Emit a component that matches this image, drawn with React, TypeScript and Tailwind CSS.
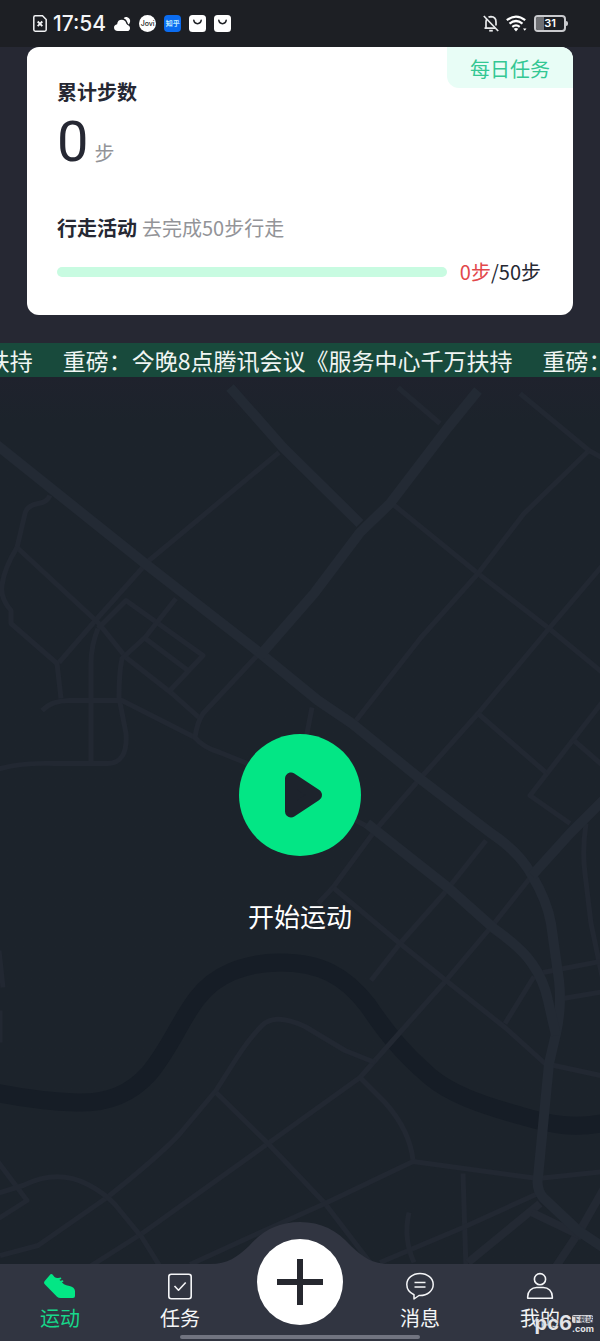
import React from 'react';
import clsx from 'clsx';

interface Tab {
  key: string;
  label: string;
  icon: React.ReactNode;
}

const NOTICE = '重磅：今晚8点腾讯会议《服务中心千万扶持';
const STEPS = 0;
const GOAL = 50;

const majorRoads = [
  'M-5 443 50 487 145 563 253 647 318 700 352 723 421 779 490 832Q520 852 532 875 547 900 551 923L559 980Q562 1006 556 1033L549 1063 538 1177Q536 1188 543 1197L578 1230 605 1248',
  'M230 387 283 447 360 523',
  'M478 390 448 427 390 503 360 532 314 593 260 655',
  'M367 823 448 887 494 928Q522 948 532 963 544 980 548 1000L556 1035',
  'M610 793 570 833 532 875',
];

const minorRoads = [
  'M279 452 149 560 98 617 59 662',
  'M50 495Q47 502 38 503 27 505 25 513L17 547 98 622 126 657 172 693 199 717',
  'M17 547Q4 568 2 585 0 597 11 610V623L57 663 61 698',
  'M98 628 126 600 203 655 170 690',
  'M176 598 145 637 122 658Q119 672 119 697L126 733Q128 763 107 763L54 763Q20 762-3 769',
  'M144 637 188 670',
  'M98 628Q91 645 91 663V762',
  'M42 710Q52 700 69 700H122L195 737',
  'M260 652 203 713Q197 722 195 737 203 747 220 752L245 762 375 830',
  'M312 707 306 738',
  'M392 503 478 573 549 628 605 674',
  'M520 393 589 450 524 513 478 573 421 637 356 720',
  'M589 450 605 459',
  'M398 387 440 423',
  'M605 562 549 628 478 713 421 777 375 830 333 887 318 903',
  'M478 713 547 773 530 795 570 823',
  'M605 698 547 773',
  'M574 740 605 767',
  'M532 875 494 923 446 980 375 1060 360 1077 268 1143 142 1233 90 1266',
  'M586 823Q582 850 585 873L591 923 603 980',
  'M486 840 444 893 400 943 371 980',
  'M333 887 400 943 446 980 505 1027 545 1063 605 1076',
  'M534 976 505 1023',
  'M543 972 605 960',
  'M563 998 605 991',
  'M375 1062 345 1050 305 1026Q275 1012 262 1025 250 1037 237 1057L216 1090 180 1133Q160 1155 107 1197L38 1245 0 1255',
  'M216 1092 268 1143 325 1203 370 1262',
  'M360 1077 385 1102Q410 1130 413 1160',
  'M605 1171 538 1178 413 1161 325 1203 249 1237 190 1264',
  'M463 1173 466 1268',
  'M538 1193 463 1227 380 1262',
  'M409 1212Q403 1238 414 1262',
  'M-3 1160 27 1200-3 1219',
  'M-3 1193 23 1185Q57 1168 88 1184 105 1193 115 1204L142 1237 160 1266',
  'M-1 950 3 987M0 1010V1042',
];

const wideRoads = ['M540 1203 468 1262', 'M605 1186 580 1230 556 1266', 'M532 1212 582 1236'];

const CityMap = () => (
  <svg
    className="absolute inset-0 h-full w-full"
    viewBox="0 376 600 888"
    preserveAspectRatio="xMidYMid slice"
    fill="none"
    strokeLinejoin="round"
    aria-hidden="true"
  >
    <path
      d="M-5 1092Q40 1101 77 1102C110 1103 132 1092 149 1073C170 1048 180 1020 197 998C215 974 245 962 280 962C320 962 345 975 368 1005C385 1030 400 1050 430 1076C450 1093 480 1104 520 1115C550 1124 575 1129 605 1122"
      stroke="#161d26"
      strokeWidth="18"
    />
    <g stroke="#222832" strokeWidth="5">
      {minorRoads.map((d) => <path key={d} d={d} />)}
    </g>
    <g stroke="#232933" strokeWidth="8">
      {wideRoads.map((d) => <path key={d} d={d} />)}
    </g>
    <g stroke="#232a34" strokeWidth="10">
      {majorRoads.map((d) => <path key={d} d={d} />)}
    </g>
  </svg>
);

const ShoeIcon = () => (
  <svg viewBox="0 0 34 28" className="h-7 w-[34px]" fill="#03e685" aria-hidden="true">
    <path d="M1.500 9.300 7.500 2.300Q8.500 1.600 9.500 2.400L11.500 5Q13 6.200 15 6L18 5.600 18.300 7 16.500 7.700 17.200 8.800 20 8.300 20.400 9.700 18.800 10.300 21 12.300Q23 13.300 26.500 14 31.500 15 32 19V24Q32 26 30 26H17.500Q15.500 26 14 24.700L2 12.500Q.2 11 1.500 9.300Z" />
  </svg>
);

const TaskIcon = () => (
  <svg viewBox="0 0 28 28" className="h-7 w-7" fill="none" stroke="#f4f5f7" strokeWidth="1.600" strokeLinejoin="round" aria-hidden="true">
    <rect x="2.800" y="2.300" width="22.400" height="24.400" rx="2.500" />
    <path d="m8.500 14 4 4.200 7.200-7.700" />
  </svg>
);

const MessageIcon = () => (
  <svg viewBox="0 0 28 28" className="h-7 w-7" fill="none" stroke="#f4f5f7" strokeWidth="1.500" strokeLinejoin="round" aria-hidden="true">
    <path d="M14 1.500C6.500 1.500.8 6.300.8 12.500c0 4.700 3 8.300 7.200 10.200V27l5-3.500h1c7.500 0 13.200-4.800 13.200-11S21.500 1.500 14 1.500Z" />
    <path d="M8.500 10.500h11M8.500 15h11" />
  </svg>
);

const UserIcon = () => (
  <svg viewBox="0 0 28 28" className="h-7 w-7" fill="none" stroke="#f4f5f7" strokeWidth="1.600" strokeLinejoin="round" aria-hidden="true">
    <circle cx="14" cy="7.200" r="5.600" />
    <path d="M1.700 26.200v-1.500c0-5.500 4-9.200 9-9.200h6.600c5 0 9 3.700 9 9.200v1.500Z" />
  </svg>
);

const BagIcon = () => (
  <svg viewBox="0 0 17 17" className="h-[17px] w-[17px]" aria-hidden="true">
    <rect width="17" height="17" rx="3.500" fill="#fff" />
    <path d="M4.800 5.200c.5 4.600 6.900 4.600 7.400 0" fill="none" stroke="#1d1f24" strokeWidth="1.500" strokeLinecap="round" />
  </svg>
);

const StatusBar = () => (
  <div className="flex h-[47px] items-center justify-between bg-[#1d1f24] pr-8 pl-[33px]">
    <div className="flex items-center gap-2">
      <div className="flex items-center gap-1.5">
        <svg viewBox="0 0 14 17" className="h-[17px] w-[14px]" fill="none" stroke="#f2f3f5" strokeWidth="1.500" aria-hidden="true">
          <path d="M2.200.8H9.500L13.200 4.500V14.800Q13.200 16.200 11.800 16.200H2.200Q.8 16.200.8 14.800V2.200Q.8.8 2.200.8Z" />
          <path d="m4.700 6.500 4.600 4.600m0-4.600-4.600 4.600" strokeWidth="1.900" />
        </svg>
        <span className="font-[Inter] text-[21px] leading-6 font-medium text-[#f4f5f7]">17:54</span>
      </div>
      <svg viewBox="0 0 18 17" className="h-4 w-[17px]" fill="#fff" aria-hidden="true">
        <path d="M4 16Q0 15.800 0 12.300 0 9.300 3.300 8.700 3.800 4 8.200 4 12 4 13 8 14 9.500 15.500 10 17.200 11 17 13 16.700 16 14 16Z" />
        <path d="M10.300 2.500Q11.500 .6 13.500 1 17.500 2.200 17.100 5.800 16.900 7.700 15.700 8.900 14.600 8.200 14.300 6.800 13.200 3.400 10.300 2.500Z" />
      </svg>
      <span className="flex h-[17px] w-[17px] items-center justify-center rounded-full bg-white font-[Inter] text-[7px] leading-none font-medium text-[#1d1f24]">Jovi</span>
      <span className="flex h-[17px] w-[17px] items-center justify-center rounded bg-[#0b6cf0] text-[7px] leading-none font-bold whitespace-nowrap text-[#bfeaff]">知乎</span>
      <BagIcon />
      <BagIcon />
    </div>
    <div className="flex items-center gap-[7px]">
      <svg viewBox="0 0 16 17" className="h-[17px] w-4" fill="none" stroke="#e9eaec" strokeWidth="1.700" aria-hidden="true">
        <path d="M3 13V7Q3 5 4 3.800M5.500 2.300Q6.500 1.600 8 1.600 13 1.800 13 7V10.500M1.500 13.200H12" />
        <path d="M.8 1 15.200 16" />
        <path d="M6.200 15.700h3.600" strokeWidth="1.800" />
      </svg>
      <svg viewBox="0 0 21 17" className="h-[17px] w-[21px]" fill="none" stroke="#fff" strokeWidth="2.200" aria-hidden="true">
        <path d="M.8 5.200Q10 -2 19.200 5.200M3.500 8.600Q10 3.400 16.500 8.600M6.300 11.900Q10 9 13.700 11.900" />
        <path d="m10 16.500-2.300-2.700q2.300-1.700 4.600 0ZM17 13.500h3.500l-1.800 2.300Z" fill="#fff" stroke="none" />
      </svg>
      <div className="flex items-center">
        <span className="relative flex h-[17px] w-8 items-center justify-center overflow-hidden rounded border-2 border-[#c9cace] font-[Inter] text-[11px] leading-none font-semibold text-white">
          <span className="absolute inset-y-0 left-0 w-2 bg-[#6d6e72]" />
          <span className="relative">31</span>
        </span>
        <span className="h-[5px] w-0.5 rounded-r bg-[#c9cace]" />
      </div>
    </div>
  </div>
);

const StepsCard = () => (
  <section className="relative mx-[27px] rounded-xl bg-white pt-[31px] pr-8 pb-[29px] pl-[30px] text-[#262833]">
    <a href="#daily" className="absolute top-0 right-0 rounded-tr-xl rounded-bl-xl bg-[#e8fdf6] px-[23px] pt-2 pb-[5px] text-xl leading-7 text-[#34c793]">
      每日任务
    </a>
    <h2 className="text-xl leading-7 font-bold">累计步数</h2>
    <p className="flex items-baseline gap-1.5">
      <span className="font-[Roboto] text-[56px] leading-[72px]">{STEPS}</span>
      <span className="text-xl leading-7 text-[#939498]">步</span>
    </p>
    <p className="mt-9 flex items-baseline gap-[5px] text-xl leading-7">
      <strong className="font-bold">行走活动</strong>
      <span className="text-[#939498]">去完成{GOAL}步行走</span>
    </p>
    <div className="mt-4 flex items-center gap-[13px]">
      <div
        role="progressbar"
        aria-label="行走活动"
        aria-valuenow={STEPS}
        aria-valuemax={GOAL}
        className="h-2.5 flex-1 overflow-hidden rounded-full bg-[#c8fbe1]"
      >
        <div className="h-full bg-[#03e685]" style={{ width: `${(STEPS / GOAL) * 100}%` }} />
      </div>
      <span className="text-xl leading-7 whitespace-nowrap">
        <span className="text-[#e2474b]">{STEPS}步</span>/{GOAL}步
      </span>
    </div>
  </section>
);

const Ticker = () => (
  <div className="flex h-[34px] items-center overflow-hidden bg-[#184a3c] text-[23px] leading-8 whitespace-nowrap text-[#f0f5f3]">
    <div className="-ml-[417px] flex gap-[30px]">
      {[0, 1, 2].map((i) => (
        <span key={i} aria-hidden={i !== 1}>{NOTICE}</span>
      ))}
    </div>
  </div>
);

const tabs: Tab[] = [
  { key: 'sport', label: '运动', icon: <ShoeIcon /> },
  { key: 'task', label: '任务', icon: <TaskIcon /> },
  { key: 'message', label: '消息', icon: <MessageIcon /> },
  { key: 'mine', label: '我的', icon: <UserIcon /> },
];

const TabLink = ({ tab, active }: { tab: Tab; active: boolean }) => (
  <a
    href={`#${tab.key}`}
    aria-current={active ? 'page' : undefined}
    className={clsx('flex flex-1 flex-col items-center gap-1.5 pt-2 text-xl leading-6', active ? 'text-[#17d88b]' : 'text-[#f4f5f7]')}
  >
    {tab.icon}
    {tab.label}
  </a>
);

const TabBar = () => (
  <nav className="relative flex h-[77px] bg-[#313541]">
    {tabs.slice(0, 2).map((tab) => (
      <TabLink key={tab.key} tab={tab} active={tab.key === 'sport'} />
    ))}
    <div className="relative flex-1">
      {/* raised hump behind the add button */}
      <svg viewBox="0 0 180 43" className="absolute bottom-full left-1/2 h-[43px] w-[180px] -translate-x-1/2" fill="#313541" aria-hidden="true">
        <path d="M0 43C18 43 27 36 39 25 53 9 69 1 90 1S127 9 141 25C153 36 162 43 180 43Z" />
      </svg>
      <button
        type="button"
        aria-label="发布"
        className="absolute -top-[25px] left-1/2 flex h-[86px] w-[86px] -translate-x-1/2 items-center justify-center rounded-full bg-white"
      >
        <svg viewBox="0 0 46 46" className="h-[46px] w-[46px]" stroke="#26282f" strokeWidth="6" aria-hidden="true">
          <path d="M23 0v46M0 23h46" />
        </svg>
      </button>
    </div>
    {tabs.slice(2).map((tab) => (
      <TabLink key={tab.key} tab={tab} active={false} />
    ))}
    <span className="absolute bottom-0.5 left-1/2 h-1 w-60 -translate-x-1/2 rounded-full bg-[#717480]" />
    <div className="absolute right-1.5 bottom-1.5 flex items-end text-[#e3e4e8] [text-shadow:0_0_2px_#313541]">
      <span className="font-[Inter] text-[20px] leading-6 font-bold">pc6</span>
      <span className="flex flex-col items-center">
        <span className="rounded-xs bg-[#d5d6db] text-[7px] leading-2 font-bold text-[#4b4e59] [text-shadow:none]">下载站</span>
        <span className="font-[Inter] text-[9px] leading-3 font-bold">.com</span>
      </span>
    </div>
  </nav>
);

export default function App() {
  return (
    <div className="flex min-h-screen flex-col bg-[#262833] font-['Noto_Sans_CJK_SC',sans-serif]">
      <StatusBar />
      <StepsCard />
      <div className="h-7" />
      <Ticker />
      <main className="relative flex flex-1 flex-col items-center justify-center gap-11 overflow-hidden bg-linear-to-b from-[#1f222d] to-[#1c232b] to-5% pt-6">
        <CityMap />
        <button type="button" aria-label="开始运动" className="relative rounded-full">
          <svg viewBox="0 0 122 122" className="h-[122px] w-[122px]" aria-hidden="true">
            <circle cx="61" cy="61" r="61" fill="#03e685" />
            <path d="M52 44.500V77.500L77 61Z" fill="#1d232c" stroke="#1d232c" strokeWidth="12" strokeLinejoin="round" />
          </svg>
        </button>
        <p className="relative text-[26px] leading-8 text-white">开始运动</p>
      </main>
      <TabBar />
    </div>
  );
}
